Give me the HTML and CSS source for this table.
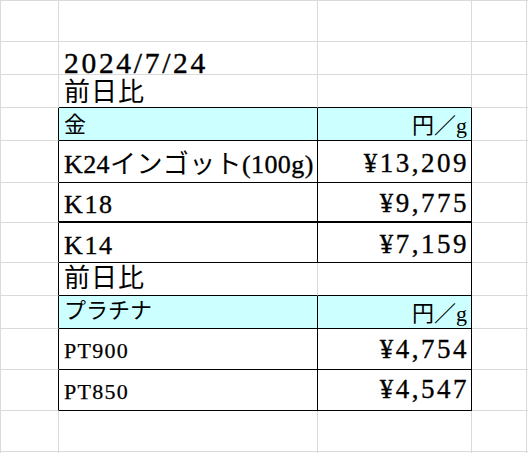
FILE: index.html
```html
<!DOCTYPE html>
<html lang="ja">
<head>
<meta charset="utf-8">
<title>金・プラチナ 価格</title>
<link rel="stylesheet" href="styles.css">
</head>
<body>
<div class="sheet">
  <!-- row 1 -->
  <div class="c"></div><div class="c"></div><div class="c"></div><div class="c"></div><div class="c e"></div>
  <!-- row 2 -->
  <div class="c"></div><div class="c date">2024/7/24</div><div class="c"></div><div class="c"></div><div class="c e"></div>
  <!-- row 3 -->
  <div class="c"></div><div class="c bb big pb3">前日比</div><div class="c bb"></div><div class="c"></div><div class="c e"></div>
  <!-- row 4 -->
  <div class="c br"></div><div class="c br bb hdr pb4">金</div><div class="c br bb hdr num pb3">円／g</div><div class="c"></div><div class="c e"></div>
  <!-- row 5 -->
  <div class="c br"></div><div class="c br bb lbl tight pb4">K24<span class="kana">インゴット</span>(100g)</div><div class="c br bb num val pb5">¥13,209</div><div class="c"></div><div class="c e"></div>
  <!-- row 6 -->
  <div class="c br"></div><div class="c br bb2 lbl pb3">K18</div><div class="c br bb2 num val pb4">¥9,775</div><div class="c"></div><div class="c e"></div>
  <!-- row 7 -->
  <div class="c br"></div><div class="c br bb lbl pb3">K14</div><div class="c br bb num val pb4">¥7,159</div><div class="c"></div><div class="c e"></div>
  <!-- row 8 -->
  <div class="c br"></div><div class="c bb big pb5">前日比</div><div class="c br bb"></div><div class="c"></div><div class="c e"></div>
  <!-- row 9 -->
  <div class="c br"></div><div class="c br bb hdr pb6">プラチナ</div><div class="c br bb hdr num pb3">円／g</div><div class="c"></div><div class="c e"></div>
  <!-- row 10 -->
  <div class="c br"></div><div class="c br bb sm pb7">PT900</div><div class="c br bb num val pb6">¥4,754</div><div class="c"></div><div class="c e"></div>
  <!-- row 11 -->
  <div class="c br"></div><div class="c br bb sm pb7">PT850</div><div class="c br bb num val pb7">¥4,547</div><div class="c"></div><div class="c e"></div>
  <!-- row 12 -->
  <div class="c"></div><div class="c"></div><div class="c"></div><div class="c"></div><div class="c e"></div>
  <!-- row 13 -->
  <div class="c last"></div><div class="c last"></div><div class="c last"></div><div class="c last"></div><div class="c e last"></div>
</div>
</body>
</html>
```

FILE: styles.css
```css
:root {
  --grid: #dadada;
  --ink: #000000;
  --head: #ccffff;
}

* {
  box-sizing: border-box;
}

html, body {
  margin: 0;
  padding: 0;
  background: #ffffff;
}

body {
  font-family: "Liberation Serif", "Noto Sans CJK JP", serif;
  color: var(--ink);
}

.sheet {
  width: 528px;
  height: 453px;
  display: grid;
  grid-template-columns: 58px 259px 154px 55px 1fr;
  grid-template-rows: 41px 33px 33px 33px 42px 40px 40px 33px 33px 41px 41px 41px 1fr;
  border-top: 1px solid var(--grid);
  border-left: 1px solid var(--grid);
  overflow: hidden;
}

.c {
  display: flex;
  align-items: flex-end;
  justify-content: flex-start;
  min-width: 0;
  overflow: hidden;
  white-space: nowrap;
  border-right: 1px solid var(--grid);
  border-bottom: 1px solid var(--grid);
  padding: 0 4px 0 5px;
  line-height: 1;
}

.e {
  border-right: none;
}

.last {
  border-bottom: none;
}

.br {
  border-right-color: var(--ink);
}

.bb {
  border-bottom-color: var(--ink);
}

.bb2 {
  border-bottom: 2px solid var(--ink);
}

.hdr {
  background: var(--head);
  font-size: 22px;
}

.num {
  justify-content: flex-end;
}

.date {
  font-size: 29.5px;
  letter-spacing: 2.7px;
  line-height: 22px;
  overflow: visible;
  -webkit-text-stroke: 0.4px var(--ink);
}

.big {
  font-size: 26px;
  line-height: 0.9;
  letter-spacing: 1px;
}

.lbl {
  font-size: 26px;
  letter-spacing: 1.6px;
  -webkit-text-stroke: 0.35px var(--ink);
}

.lbl.tight {
  letter-spacing: 0.4px;
}

.kana {
  -webkit-text-stroke: 0;
}

.val {
  font-size: 27px;
  letter-spacing: 2.5px;
  padding-right: 2px;
  -webkit-text-stroke: 0.35px var(--ink);
}

.sm {
  font-size: 22px;
  letter-spacing: 1.3px;
  -webkit-text-stroke: 0.25px var(--ink);
}

.pb3 { padding-bottom: 3px; }
.pb4 { padding-bottom: 4px; }
.pb5 { padding-bottom: 5px; }
.pb6 { padding-bottom: 6px; }
.pb7 { padding-bottom: 7px; }
```
